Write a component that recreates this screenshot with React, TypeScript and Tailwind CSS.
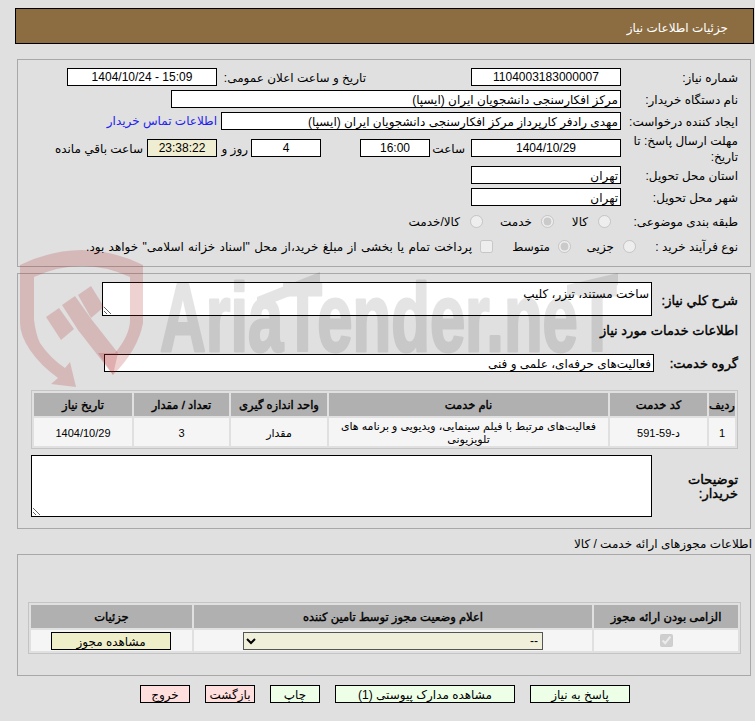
import React from "react";

const box = "h-[18px] shrink-0 border border-black bg-white text-[12px] leading-[16px] px-[2px] overflow-hidden whitespace-nowrap";
const label = "shrink-0 pt-[2px] text-[12px] leading-[16px] text-black";
const strong = "text-[13px] leading-[16px] [-webkit-text-stroke:0.4px_black]";
const cellHead = "bg-[#b0b0b0] text-[11.5px] font-normal [-webkit-text-stroke:0.4px_black] text-center text-black p-0 pt-[2px] h-[23px]";
const cellBody = "bg-[#f5f5f5] text-[11px] text-center text-black p-0 leading-[13px]";
const btn = "h-[18px] border border-black pt-[1px] text-[12px] leading-[16px] text-black text-center";

function Watermark() {
  return (
    <svg className="absolute left-0 top-0 pointer-events-none" width="755" height="721" viewBox="0 0 755 721">
      <g fill="rgb(170,30,30)" fillOpacity="0.2">
        <path d="M20 265 Q82 235 143 265 L143 323 Q138 350 113 375 L98 353 L115 353 Q130 335 130 320 L130 277 Q82 255 34 277 L34 320 Q36 335 40 343 Q50 358 65 368 L70 362 L76 387 L51 384 L58 378 Q40 365 30 350 Q20 335 20 323 Z" />
        <path d="M46 317 L59 308 L74 329 L61 340 Z" />
        <path d="M62 305 L75 296 L92 320 L118 353 L113 375 L78 330 Z" />
        <path d="M78 295 L91 286 L104 307 L91 318 Z" />
      </g>
      <g fill="#000" stroke="#000" strokeWidth="3" strokeLinejoin="round" opacity="0.1">
        <text direction="ltr" transform="translate(160 351) scale(0.66 1)" fontFamily="'Liberation Sans', sans-serif" fontWeight="700" fontSize="96">AriaTender.neT</text>
        <path d="M257 297 L320 272 L320 284 L257 309 Z" strokeWidth="0" />
        <path d="M567 285 L618 273 L618 285 L567 297 Z" strokeWidth="0" />
      </g>
    </svg>
  );
}

function Radio({ checked }: { checked?: boolean }) {
  return <input type="radio" disabled checked={checked} readOnly className="m-0 size-[13px] shrink-0" />;
}

function Panel1() {
  return (
    <div className="ml-[17px] mr-[4px] mt-[15px] h-[208px] border border-[#a8a8a8] pt-[8px] pr-[12px]">
      <div className="flex items-center mb-[4px]">
        <div className={`${label} w-[117px]`}>شماره نیاز:</div>
        <div className={`${box} w-[150px] text-center`}>1104003183000007</div>
        <div className={`${label} w-[149px] ms-[105px]`}>تاریخ و ساعت اعلان عمومی:</div>
        <div className={`${box} w-[150px] text-center`} dir="ltr">1404/10/24 - 15:09</div>
      </div>
      <div className="flex items-center mb-[4px]">
        <div className={`${label} w-[117px]`}>نام دستگاه خریدار:</div>
        <div className={`${box} w-[450px] pt-[1px]`}>مرکز افکارسنجی دانشجویان ایران (ایسپا)</div>
      </div>
      <div className="flex items-center mb-[4px]">
        <div className={`${label} w-[117px]`}>ایجاد کننده درخواست:</div>
        <div className={`${box} w-[400px] pt-[1px]`}>مهدی رادفر کارپرداز مرکز افکارسنجی دانشجویان ایران (ایسپا)</div>
        <a className="ms-[4px] text-[12px] leading-[16px] text-[#2222ee]">اطلاعات تماس خریدار</a>
      </div>
      <div className="flex items-center h-[28px] mb-[4px]">
        <div className={`${label} w-[117px]`}>مهلت ارسال پاسخ: تا تاریخ:</div>
        <div className={`${box} w-[150px] text-center`}>1404/10/29</div>
        <div className={`${label} w-[41px] pr-[6px]`}>ساعت</div>
        <div className={`${box} w-[70px] text-center`}>16:00</div>
        <div className="w-[39px] shrink-0" />
        <div className={`${box} w-[70px] text-center`}>4</div>
        <div className={`${label} w-[34px] pr-[3px]`}>روز و</div>
        <div className={`${box} w-[70px] text-center !bg-[#f0eed2]`}>23:38:22</div>
        <div className={`${label} ms-[4px]`}>ساعت باقي مانده</div>
      </div>
      <div className="flex items-center mb-[4px]">
        <div className={`${label} w-[117px]`}>استان محل تحویل:</div>
        <div className={`${box} w-[150px] pt-[1px]`}>تهران</div>
      </div>
      <div className="flex items-center">
        <div className={`${label} w-[117px]`}>شهر محل تحویل:</div>
        <div className={`${box} w-[150px] pt-[1px]`}>تهران</div>
      </div>
      <div className="flex items-center h-[22px] mt-[4px]">
        <div className={`${label} w-[127px]`}>طبقه بندی موضوعی:</div>
        <Radio />
        <div className={`${label} w-[36px] pr-[10px]`}>کالا</div>
        <div className="w-[8px]" />
        <Radio checked />
        <div className={`${label} w-[42px] pr-[9px]`}>خدمت</div>
        <div className="w-[16px]" />
        <Radio />
        <div className={`${label} pr-[10px]`}>کالا/خدمت</div>
      </div>
      <div className="flex items-center h-[22px] mt-[3px]">
        <div className={`${label} w-[102px]`}>نوع فرآیند خرید :</div>
        <Radio />
        <div className={`${label} w-[40px] pr-[9px]`}>جزیی</div>
        <div className="w-[12px]" />
        <Radio checked />
        <div className={`${label} w-[50px] pr-[8px]`}>متوسط</div>
        <div className="w-[15px]" />
        <input type="checkbox" disabled className="m-0 size-[13px] shrink-0" />
        <div className={`${label} pr-[8px] [word-spacing:1px]`}>پرداخت تمام یا بخشی از مبلغ خرید،از محل "اسناد خزانه اسلامی" خواهد بود.</div>
      </div>
    </div>
  );
}

function Panel2() {
  const cell = `${cellBody} pt-[2px]`;
  return (
    <div className="ml-[17px] mr-[4px] mt-[6px] h-[256px] border border-[#a8a8a8] pt-[8px]">
      <div className="flex items-start pr-[12px]">
        <div className={`w-[86px] shrink-0 pt-[11px] ${strong}`}>شرح کلي نیاز:</div>
        <textarea
          readOnly
          className="w-[550px] h-[34px] border border-black bg-white text-[12px] leading-[16px] px-[2px] pt-[3px] resize block"
          value="ساخت مستند، تیزر، کلیپ"
        />
      </div>
      <div className={`pr-[12px] mt-[7px] ${strong}`}>اطلاعات خدمات مورد نیاز</div>
      <div className="flex items-center pr-[12px] mt-[15px]">
        <div className={`w-[84px] shrink-0 pt-[2px] ${strong}`}>گروه خدمت:</div>
        <div className={`${box} w-[550px] pt-[1px]`}>فعالیت‌های حرفه‌ای، علمی و فنی</div>
      </div>
      <table className="mr-[12px] mt-[18px] w-[707px] table-fixed border-separate border-spacing-[2px] border border-[#c4c4c4]">
        <colgroup>
          <col className="w-[26px]" />
          <col className="w-[97px]" />
          <col className="w-[279px]" />
          <col className="w-[96px]" />
          <col className="w-[95px]" />
          <col />
        </colgroup>
        <thead>
          <tr>
            <th className={cellHead}>ردیف</th>
            <th className={cellHead}>کد خدمت</th>
            <th className={cellHead}>نام خدمت</th>
            <th className={cellHead}>واحد اندازه گیری</th>
            <th className={cellHead}>تعداد / مقدار</th>
            <th className={cellHead}>تاریخ نیاز</th>
          </tr>
        </thead>
        <tbody>
          <tr className="h-[28px]">
            <td className={cell}>1</td>
            <td className={cell}>د-59-591</td>
            <td className={cell}>فعالیت‌های مرتبط با فیلم سینمایی، ویدیویی و برنامه های تلویزیونی</td>
            <td className={cell}>مقدار</td>
            <td className={cell}>3</td>
            <td className={cell}>1404/10/29</td>
          </tr>
        </tbody>
      </table>
      <div className="flex items-start pr-[12px] mt-[6px]">
        <div className={`w-[86px] shrink-0 pt-[18px] pl-[20px] ${strong} !leading-[14px]`}>توضیحات خریدار:</div>
        <textarea readOnly className="w-[621px] h-[62px] border border-black bg-white text-[12px] px-[2px] resize block" />
      </div>
    </div>
  );
}

function Panel3() {
  return (
    <div className="ml-[17px] mr-[4px] h-[122px] border border-[#a8a8a8] pt-[47px]">
      <table className="mr-[9px] w-[713px] table-fixed border-separate border-spacing-[2px] border border-[#c4c4c4]">
        <colgroup>
          <col className="w-[144px]" />
          <col className="w-[398px]" />
          <col />
        </colgroup>
        <thead>
          <tr>
            <th className={cellHead}>الزامی بودن ارائه مجوز</th>
            <th className={cellHead}>اعلام وضعیت مجوز توسط تامین کننده</th>
            <th className={cellHead}>جزئیات</th>
          </tr>
        </thead>
        <tbody>
          <tr className="h-[21px]">
            <td className={cellBody}>
              <input type="checkbox" disabled checked readOnly className="m-0 size-[13px] align-middle" />
            </td>
            <td className={cellBody}>
              <select disabled className="block mx-auto w-[300px] h-[18px] border border-[#555] bg-[#f0f0da] text-[12px] text-black opacity-100">
                <option>--</option>
              </select>
            </td>
            <td className={cellBody}>
              <div className={`${btn} mr-[21px] w-[120px] bg-[#eeeec8]`}>مشاهده مجوز</div>
            </td>
          </tr>
        </tbody>
      </table>
    </div>
  );
}

export default function App() {
  return (
    <div dir="rtl" className="relative w-[755px] h-[721px] overflow-hidden bg-[#e0e0e0] text-black font-['Liberation_Sans','DejaVu_Sans',sans-serif]">
      <div className="pt-[8px]">
        <div className="ml-[15px] mr-[1px] h-[36px] border border-black bg-[#8c6d42] pr-[25px] pt-[11px] text-[12px] leading-[16px] text-white">
          جزئیات اطلاعات نیاز
        </div>
        <Panel1 />
        <Panel2 />
        <div className="mr-[3px] mt-[6px] h-[19px] text-[12px] leading-[16px] pt-[1px]">اطلاعات مجوزهای ارائه خدمت / کالا</div>
        <Panel3 />
        <div className="flex gap-[15px] mt-[9px] mr-[125px]">
          <div className={`${btn} w-[100px] bg-[#eeffe8]`}>پاسخ به نیاز</div>
          <div className={`${btn} w-[180px] bg-[#eeffe8]`}>مشاهده مدارک پیوستی (1)</div>
          <div className={`${btn} w-[50px] bg-[#eeffe8]`}>چاپ</div>
          <div className={`${btn} w-[50px] bg-[#ffdede]`}>بازگشت</div>
          <div className={`${btn} w-[50px] bg-[#ffdede]`}>خروج</div>
        </div>
      </div>
      <Watermark />
    </div>
  );
}
